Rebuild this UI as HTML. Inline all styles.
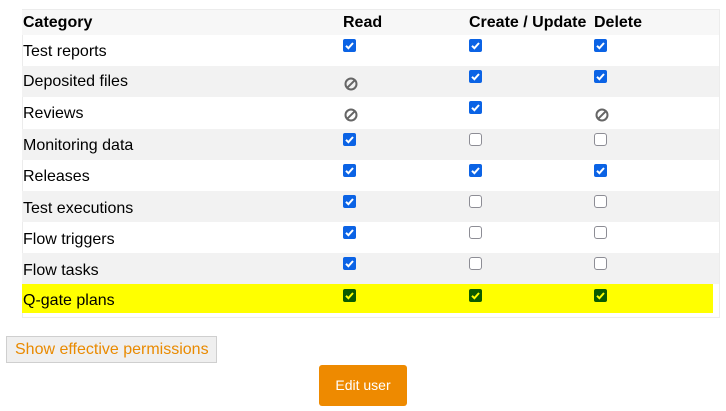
<!DOCTYPE html>
<html><head><meta charset="utf-8"><style>
*{margin:0;padding:0;box-sizing:border-box}
body{width:726px;height:411px;background:#fff;font-family:"Liberation Sans",Arial,sans-serif;position:relative;overflow:hidden;color:#000}
.tbl{position:absolute;left:22px;top:9px;width:698px;height:309px;border:1px solid #ececec;background:#fff}
.row{position:absolute;left:22px;width:697px;font-size:16px}
.row span.t{position:absolute;left:1px}
.g{background:#f2f2f2}
.hd{background:#f7f7f7;font-weight:bold}
.cb{position:absolute;width:13px;height:13px;border-radius:2px}
.on{background:#0b63e5}
.off{background:#fff;border:1px solid #8d8d95;border-radius:3px}
.gr{background:#0a5a00}
.cb svg{position:absolute;left:0;top:0}
.ban{position:absolute;width:14px;height:14px}
</style></head><body>
<div class="tbl"></div>
<div class="row hd" style="top:10px;height:25px"><span class="t" style="top:4px">Category</span><span class="t" style="left:321px;top:4px">Read</span><span class="t" style="left:447px;top:4px">Create / Update</span><span class="t" style="left:572px;top:4px">Delete</span></div>
<div class="row" style="top:35px;height:31px"><span class="t" style="top:8px">Test reports</span></div>
<div class="row g" style="top:66px;height:31px"><span class="t" style="top:7px">Deposited files</span></div>
<div class="row" style="top:97px;height:32px"><span class="t" style="top:8px">Reviews</span></div>
<div class="row g" style="top:129px;height:31px"><span class="t" style="top:8px">Monitoring data</span></div>
<div class="row" style="top:160px;height:31px"><span class="t" style="top:8px">Releases</span></div>
<div class="row g" style="top:191px;height:31px"><span class="t" style="top:9px">Test executions</span></div>
<div class="row" style="top:222px;height:31px"><span class="t" style="top:9px">Flow triggers</span></div>
<div class="row g" style="top:253px;height:31px"><span class="t" style="top:9px">Flow tasks</span></div>
<div class="row" style="top:284px;height:29px;background:#ffff00;width:691px"><span class="t" style="top:8px">Q-gate plans</span></div>
<div id="boxes"></div>
<div style="position:absolute;left:6px;top:336px;width:211px;height:27px;background:#efefef;border:1px solid #cfcfcf;color:#e98a00;font-size:16px;line-height:25px;padding-left:8px">Show effective permissions</div>
<div style="position:absolute;left:319px;top:365px;width:88px;height:41px;background:#ee8a00;border-radius:3px;color:#fff;font-size:14px;line-height:41px;text-align:center">Edit user</div>
<script>
var cols=[343,469,594];
var rows=[[35,'ccc'],[66,'bcc'],[97,'bcb'],[129,'cuu'],[160,'ccc'],[191,'cuu'],[222,'cuu'],[253,'cuu'],[284,'ggg']];
var chk='<svg width="13" height="13" viewBox="0 0 13 13"><path d="M3 6.8 L5.4 9.2 L10 4" fill="none" stroke="COL" stroke-width="2"/></svg>';
var h='';
rows.forEach(function(r){var y=r[0];for(var i=0;i<3;i++){var t=r[1][i],x=cols[i];
if(t=='c')h+='<div class="cb on" style="left:'+x+'px;top:'+(y+4)+'px">'+chk.replace('COL','#fff')+'</div>';
else if(t=='g')h+='<div class="cb gr" style="left:'+x+'px;top:'+(y+5)+'px">'+chk.replace('COL','#ffff00')+'</div>';
else if(t=='u')h+='<div class="cb off" style="left:'+x+'px;top:'+(y+4)+'px"></div>';
else h+='<svg class="ban" style="left:'+(x+1)+'px;top:'+(y+11)+'px" width="15" height="15" viewBox="0 0 14 14"><circle cx="7" cy="7" r="5.5" fill="none" stroke="#666" stroke-width="2"/><path d="M3.3 10.7 L10.7 3.3" stroke="#666" stroke-width="2"/></svg>';}});
document.getElementById('boxes').innerHTML=h;
</script>
</body></html>
